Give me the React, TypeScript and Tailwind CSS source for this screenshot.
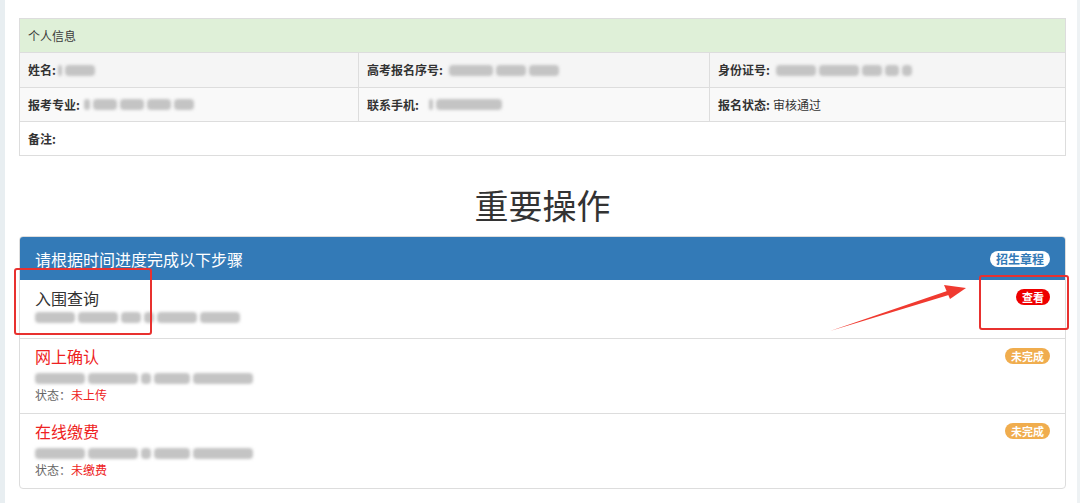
import React from "react";

const font = { fontFamily: '"Noto Sans CJK SC", "Noto Sans", sans-serif' };

function Blur({ w, className = "" }: { w: number[]; className?: string }) {
  // blurred redacted text, a few grey chunks in a row
  return (
    <div className={"flex items-center gap-[3px] " + className}>
      {w.map((x, i) => (
        <span key={i} className="block h-[11px] rounded-sm bg-[#c4c4c4] blur-[1.5px]" style={{ width: x }} />
      ))}
    </div>
  );
}

function Badge({ text, color }: { text: string; color: string }) {
  return (
    <span className={"block rounded-[10px] px-[6px] py-[1px] text-[11px] font-bold leading-[14px] " + color}>
      {text}
    </span>
  );
}

export default function App() {
  return (
    <div className="relative flex h-[503px] w-[1080px] overflow-hidden bg-white text-[#333]" style={font}>
      {/* left strip */}
      <div className="w-[5px] bg-[#e8eef1]" />
      <div className="flex-1 pl-[14px] pr-[11px] pt-[18px]">
        {/* personal info table */}
        <div className="border border-[#ddd] text-[12px]">
          <div className="flex h-[33px] items-center bg-[#dff0d8] px-2 text-[#3c3c3c]">个人信息</div>
          <div className="grid h-[35px] grid-cols-[338px_351px_1fr] border-t border-[#ddd] bg-[#f5f5f5]">
            <div className="flex items-center px-2">
              <b>姓名:</b>
              <Blur w={[4, 30]} className="ml-[2px]" />
            </div>
            <div className="flex items-center border-l border-[#ddd] px-2">
              <b>高考报名序号:</b>
              <Blur w={[44, 30, 30]} className="ml-[6px]" />
            </div>
            <div className="flex items-center border-l border-[#ddd] px-2">
              <b>身份证号:</b>
              <Blur w={[40, 40, 20, 14, 10]} className="ml-[6px]" />
            </div>
          </div>
          <div className="grid h-[34px] grid-cols-[338px_351px_1fr] border-t border-[#ddd] bg-[#f9f9f9]">
            <div className="flex items-center px-2">
              <b>报考专业:</b>
              <Blur w={[6, 24, 24, 24, 20]} className="ml-[4px]" />
            </div>
            <div className="flex items-center border-l border-[#ddd] px-2">
              <b>联系手机:</b>
              <Blur w={[4, 66]} className="ml-[10px]" />
            </div>
            <div className="flex items-center border-l border-[#ddd] px-2">
              <b>报名状态:</b>
              <span className="ml-[3px]">审核通过</span>
            </div>
          </div>
          <div className="flex h-[34px] items-center border-t border-[#ddd] bg-white px-2">
            <b>备注:</b>
          </div>
        </div>

        {/* heading */}
        <h1 className="mt-[28px] mb-[10px] text-center text-[34px] leading-[42px] text-[#333]">重要操作</h1>

        {/* steps panel */}
        <div className="overflow-hidden rounded-[4px] border border-[#ddd]">
          <div className="flex h-[43px] items-center justify-between bg-[#337ab7] px-[15px] text-white">
            <span className="text-[16px]">请根据时间进度完成以下步骤</span>
            <span className="rounded-[10px] bg-white px-[6px] text-[12px] font-bold leading-[16px] text-[#337ab7]">招生章程</span>
          </div>

          <div className="h-[58px] px-[15px] pt-[7px]">
            <div className="flex items-start justify-between">
              <span className="text-[16px] leading-[22px] text-[#333]">入围查询</span>
              <div className="mt-[2px]"><Badge text="查看" color="bg-[#ee0000] text-white" /></div>
            </div>
            <Blur w={[40, 40, 20, 10, 40, 40]} className="mt-[3px]" />
          </div>

          <div className="h-[75px] border-t border-[#ddd] px-[15px] pt-[6px]">
            <div className="flex items-start justify-between">
              <span className="text-[16px] leading-[22px] text-[#ee2222]">网上确认</span>
              <div className="mt-[3px]"><Badge text="未完成" color="bg-[#f0ad4e] text-white" /></div>
            </div>
            <Blur w={[50, 50, 10, 36, 60]} className="mt-[6px]" />
            <div className="mt-[2px] text-[12px] leading-[18px]">
              <span className="text-[#666]">状态：</span>
              <span className="text-[#ee2222]">未上传</span>
            </div>
          </div>

          <div className="h-[75px] border-t border-[#ddd] px-[15px] pt-[6px]">
            <div className="flex items-start justify-between">
              <span className="text-[16px] leading-[22px] text-[#ee2222]">在线缴费</span>
              <div className="mt-[3px]"><Badge text="未完成" color="bg-[#f0ad4e] text-white" /></div>
            </div>
            <Blur w={[50, 50, 10, 36, 60]} className="mt-[6px]" />
            <div className="mt-[2px] text-[12px] leading-[18px]">
              <span className="text-[#666]">状态：</span>
              <span className="text-[#ee2222]">未缴费</span>
            </div>
          </div>
        </div>
      </div>
      <div className="w-[3px] bg-[#eef2f4]" />

      {/* annotations drawn over the screenshot */}
      <div className="absolute left-[14px] top-[268px] h-[67px] w-[138px] rounded-[3px] border-2 border-[#e8312f]" />
      <div className="absolute left-[979px] top-[275px] h-[55px] w-[90px] rounded-[3px] border-2 border-[#e8312f]" />
      <svg className="absolute left-0 top-0" width="1080" height="503">
        <polygon points="830,331 952,294 950,290" fill="#f03a30" />
        <polygon points="944,285 966,288 950,299" fill="#f03a30" />
      </svg>
    </div>
  );
}
